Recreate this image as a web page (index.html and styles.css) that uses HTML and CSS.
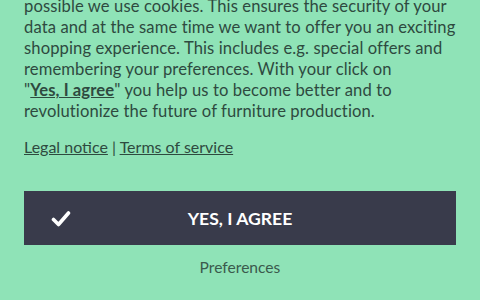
FILE: index.html
```html
<!DOCTYPE html>
<html lang="en">
<head>
<meta charset="utf-8">
<link rel="stylesheet" href="styles.css">
</head>
<body>
<div class="banner">
  <p class="intro">possible we use cookies. This ensures the security of your<br>data and at the same time we want to offer you an exciting<br>shopping experience. This includes e.g. special offers and<br>remembering your preferences. With your click on<br>"<a href="#" class="strong-link">Yes, I agree</a>" you help us to become better and to<br>revolutionize the future of furniture production.</p>
  <p class="legal"><a href="#">Legal notice</a> | <a href="#">Terms of service</a></p>
  <button class="agree" type="button">
    <svg class="check" viewBox="0 0 20 18" width="20" height="18" aria-hidden="true">
      <path d="M2.5 9.5 L7.5 14.5 L17.5 3" fill="none" stroke="#ffffff" stroke-width="3.6" stroke-linecap="round" stroke-linejoin="round"/>
    </svg>
    <span class="agree-label">YES, I AGREE</span>
  </button>
  <div class="prefs">Preferences</div>
</div>
</body>
</html>
```
FILE: styles.css
```css
html, body {
  margin: 0;
  padding: 0;
  background: #8fe3b7;
  overflow: hidden;
}
body {
  font-family: Lato, "Noto Sans", sans-serif;
  color: #2e4a3f;
}
.banner {
  padding: 0 24px;
  margin-top: -4px;
}
.intro {
  margin: 0;
  font-size: 16.6px;
  letter-spacing: 0.1px;
  line-height: 21px;
  white-space: nowrap;
}
.intro a {
  color: inherit;
}
.strong-link {
  font-weight: 700;
}
.legal {
  margin: 14px 0 0;
  font-size: 16px;
  line-height: 21px;
}
.legal a {
  color: inherit;
}
.agree {
  margin-top: 34px;
  width: 100%;
  height: 54px;
  border: 0;
  background: #393b4b;
  color: #ffffff;
  display: flex;
  align-items: center;
  justify-content: center;
  position: relative;
  padding: 0;
  font-family: Lato, "Noto Sans", sans-serif;
  font-weight: 700;
  font-size: 17.6px;
  cursor: pointer;
}
.check {
  position: absolute;
  left: 27px;
  top: 19px;
}
.prefs {
  text-align: center;
  font-size: 15.6px;
  line-height: 20px;
  margin-top: 12px;
  color: #3b5a4d;
}
```
